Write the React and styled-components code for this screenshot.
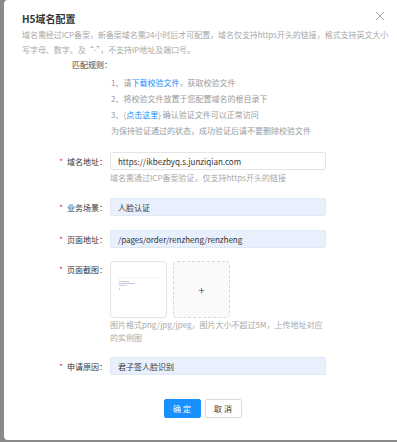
import styled, { createGlobalStyle } from 'styled-components';

const GlobalStyle = createGlobalStyle`
  html, body {
    margin: 0;
    padding: 0;
    background: #8a8a8a;
  }
  body {
    font-family: "Noto Sans CJK SC", "Noto Sans", sans-serif;
    overflow: hidden;
  }
`

const Overlay = styled.div`
  width: 397px;
  height: 442px;
  overflow: hidden;
  padding: 0 0 2px 4px;
  box-sizing: border-box;
`

const Modal = styled.div`
  position: relative;
  width: 398px;
  height: 440px;
  background: #fff;
  border-radius: 4px;
  padding: 11px 19px 0 18px;
  box-sizing: border-box;
`

const Title = styled.h2`
  margin: 0;
  font-size: 10px;
  line-height: 15px;
  font-weight: 700;
  color: #333;
`

const Close = styled.button`
  position: absolute;
  top: 11px;
  right: 17px;
  width: 10px;
  height: 10px;
  padding: 0;
  border: none;
  background: none;
  display: flex;
`

const Desc = styled.p`
  margin: 1px -8px 0 0;
  font-size: 8px;
  line-height: 15px;
  letter-spacing: -0.05px;
  color: #a8a8a8;
`

const RulesTitle = styled.div`
  margin-left: 50px;
  font-size: 8px;
  line-height: 15px;
  color: #444;
`

const RulesList = styled.div`
  margin: 3px 0 0 89px;
  font-size: 8px;
  line-height: 16px;
  color: #9a9a9a;
`

const Link = styled.a`
  color: #1890ff;
  text-decoration: none;
`

const Form = styled.div`
  margin-top: 13px;
  display: flex;
  flex-direction: column;
`

const Row = styled.div`
  display: grid;
  grid-template-columns: 88px 216px;
  margin-bottom: ${p => p.$gap}px;
`

const Label = styled.label`
  display: flex;
  justify-content: flex-end;
  align-items: ${p => (p.$top ? 'flex-start' : 'center')};
  padding-right: 3px;
  padding-top: ${p => (p.$top ? '3px' : '0')};
  height: 18px;
  font-size: 8px;
  color: #333;
  white-space: nowrap;
`

const Star = styled.span`
  color: #f5222d;
  margin-right: 4px;
  font-size: 8px;
`

const Input = styled.div`
  height: 18px;
  box-sizing: border-box;
  border: 1px solid ${p => (p.$filled ? '#e2e8f2' : '#e3e3e3')};
  background: ${p => (p.$filled ? '#e8f0fe' : '#fff')};
  border-radius: 2px;
  padding-left: 7px;
  display: flex;
  align-items: center;
  font-size: 8px;
  color: #333;
`

const Hint = styled.div`
  font-size: 8px;
  line-height: ${p => p.$lh || 12}px;
  color: #a8a8a8;
  margin-top: ${p => p.$mt || 0}px;
`

const Uploads = styled.div`
  display: flex;
  gap: 6px;
`

const UploadBox = styled.div`
  width: 57px;
  height: 57px;
  box-sizing: border-box;
  border-radius: 4px;
  border: 1px ${p => (p.$dashed ? 'dashed #d9d9d9' : 'solid #e3e3e3')};
  background: ${p => (p.$dashed ? '#fafafa' : '#fff')};
  display: flex;
  align-items: center;
  justify-content: center;
  color: #666;
  font-size: 11px;
`

const Footer = styled.div`
  display: flex;
  justify-content: center;
  gap: 4px;
`

const Button = styled.button`
  width: 37px;
  height: 19px;
  box-sizing: border-box;
  border-radius: 2px;
  border: 1px solid ${p => (p.$primary ? '#1890ff' : '#d9d9d9')};
  background: ${p => (p.$primary ? '#1890ff' : '#fff')};
  color: ${p => (p.$primary ? '#fff' : '#333')};
  font-family: inherit;
  font-size: 8px;
  letter-spacing: 2px;
  padding: 0 0 0 2px;
`

const Thumb = () => (
  <svg width="50" height="30" viewBox="0 0 50 30">
    <line x1="3" y1="3" x2="48" y2="3" stroke="#e6e6e6" strokeWidth="0.6" />
    <rect x="5" y="6" width="10" height="1" fill="#c8c8c8" />
    <rect x="5" y="8" width="16" height="1" fill="#b8c6e8" />
    <rect x="5" y="10" width="8" height="1" fill="#d0d0d0" />
    <rect x="5" y="13" width="1" height="2" fill="#d0d0d0" />
  </svg>
)

const FormRow = ({ label, gap, top, children }) => (
  <Row $gap={gap}>
    <Label $top={top}><Star>*</Star>{label}</Label>
    <div>{children}</div>
  </Row>
)

export default function App() {
  return (
    <Overlay>
      <GlobalStyle />
      <Modal>
        <Title>H5域名配置</Title>
        <Close>
          <svg width="10" height="10" viewBox="0 0 10 10">
            <path d="M1 1 L9 9 M9 1 L1 9" stroke="#999" strokeWidth="0.9" />
          </svg>
        </Close>
        <Desc>
          域名需经过ICP备案，新备案域名需24小时后才可配置，域名仅支持https开头的链接，格式支持英文大小写字母、数字、及“-”，不支持IP地址及端口号。
        </Desc>
        <RulesTitle>匹配规则：</RulesTitle>
        <RulesList>
          <div>1、请<Link>下载校验文件</Link>，获取校验文件</div>
          <div>2、将校验文件放置于您配置域名的根目录下</div>
          <div>3、(<Link>点击这里</Link>) 确认验证文件可以正常访问</div>
          <div>为保持验证通过的状态，成功验证后请不要删除校验文件</div>
        </RulesList>
        <Form>
          <FormRow label="域名地址：" gap={14}>
            <Input>https://ikbezbyq.s.junziqian.com</Input>
            <Hint $mt={2}>域名需通过ICP备案验证，仅支持https开头的链接</Hint>
          </FormRow>
          <FormRow label="业务场景：" gap={14}>
            <Input $filled>人脸认证</Input>
          </FormRow>
          <FormRow label="页面地址：" gap={13}>
            <Input $filled>/pages/order/renzheng/renzheng</Input>
          </FormRow>
          <FormRow label="页面截图：" gap={13} top>
            <Uploads>
              <UploadBox><Thumb /></UploadBox>
              <UploadBox $dashed>+</UploadBox>
            </Uploads>
            <Hint $lh={13}>图片格式png/jpg/jpeg，图片大小不超过5M，上传地址对应的实例图</Hint>
          </FormRow>
          <FormRow label="申请原因：" gap={24}>
            <Input $filled>君子签人脸识别</Input>
          </FormRow>
        </Form>
        <Footer>
          <Button $primary>确定</Button>
          <Button>取消</Button>
        </Footer>
      </Modal>
    </Overlay>
  );
}
